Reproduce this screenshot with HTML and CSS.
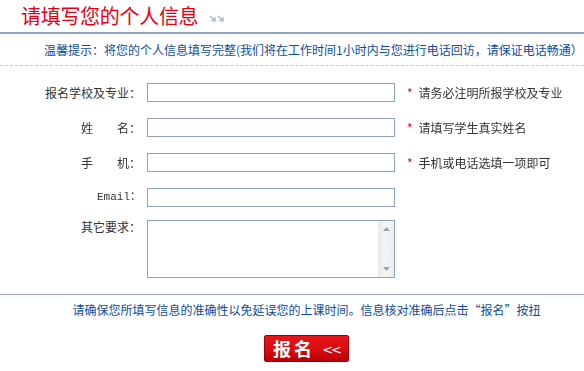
FILE: index.html
```html
<!DOCTYPE html>
<html lang="zh-CN">
<head>
  <meta charset="UTF-8" />
  <title>请填写您的个人信息</title>
  <link rel="stylesheet" href="styles.css">
</head>
<body>
  <div class="page-head">
    <h1>请填写您的个人信息</h1>
    <span class="head-arrows">
      <svg width="16" height="8" viewBox="0 0 16 8"><path d="M1 1l5 5M6 2v4H2M9 1l5 5M14 2v4h-4" stroke="#9fb0c4" stroke-width="1.2" fill="none"/></svg>
    </span>
  </div>

  <div class="tip">温馨提示：将您的个人信息填写完整(我们将在工作时间1小时内与您进行电话回访，请保证电话畅通）</div>

  <form class="signup" onsubmit="event.preventDefault();">
    <label for="school">报名学校及专业：</label>
    <input type="text" id="school" autofocus>
    <span class="note"><i>*</i>请务必注明所报学校及专业</span>

    <label for="name">姓　　名：</label>
    <input type="text" id="name">
    <span class="note"><i>*</i>请填写学生真实姓名</span>

    <label for="mobile">手　　机：</label>
    <input type="text" id="mobile">
    <span class="note"><i>*</i>手机或电话选填一项即可</span>

    <label for="email" class="mono">Email：</label>
    <input type="text" id="email">
    <span class="note"></span>

    <label for="other" class="lift">其它要求：</label>
    <div class="area-box lift">
      <textarea id="other"></textarea>
      <span class="fake-scroll">
        <svg width="7" height="4" viewBox="0 0 7 4"><path d="M0 4L3.5 0 7 4z" fill="#a0a0a0"/></svg>
        <svg width="7" height="4" viewBox="0 0 7 4"><path d="M0 0h7L3.5 4z" fill="#a0a0a0"/></svg>
      </span>
    </div>
    <span class="note"></span>
  </form>

  <div class="foot">
    <p>请确保您所填写信息的准确性以免延误您的上课时间。信息核对准确后点击“报名”按扭</p>
    <button type="button" class="submit-btn">报名 <span class="chev">&lt;&lt;</span></button>
  </div>
</body>
</html>
```

FILE: styles.css
```css
body {
  margin: 0;
  background: #fff;
  color: #333;
  font-family: "Noto Sans CJK SC", "Liberation Sans", sans-serif;
  font-size: 12px;
  text-autospace: no-autospace;
  text-spacing-trim: space-all;
}

.page-head {
  display: flex;
  align-items: center;
  height: 32px;
  padding-left: 21px;
  border-bottom: 2px solid #8fa5bf;
}

.page-head h1 {
  margin: 0;
  font-size: 20px;
  font-weight: normal;
  color: #e60012;
  line-height: 24px;
  letter-spacing: -0.3px;
}

.head-arrows {
  margin-left: 11px;
  margin-top: 6px;
  display: flex;
}

.tip {
  height: 31px;
  line-height: 31px;
  padding-left: 44px;
  color: #0d4c98;
  border-bottom: 1px dashed #c8c8c8;
  white-space: nowrap;
  overflow: hidden;
}

.signup {
  display: grid;
  grid-template-columns: 141px 248px 1fr;
  grid-template-rows: 19px 19px 19px 19px 58px;
  column-gap: 6px;
  row-gap: 16px;
  padding: 17px 0 13px;
  align-items: start;
}

.signup label {
  text-align: right;
  height: 19px;
  line-height: 19px;
  color: #333;
  white-space: pre;
}

.signup label.mono {
  font-family: "Liberation Mono", "Noto Sans CJK SC", monospace;
  font-size: 11px;
}

.signup .lift {
  margin-top: -3px;
}

.signup label.lift {
  line-height: 14px;
}

.signup input[type="text"] {
  box-sizing: border-box;
  width: 248px;
  height: 19px;
  border: 1px solid #8ca4bf;
  padding: 0 2px;
  margin: 0;
  font-size: 12px;
  outline: none;
}

.area-box {
  position: relative;
  width: 248px;
  height: 58px;
}

.area-box textarea {
  display: block;
  box-sizing: border-box;
  width: 248px;
  height: 58px;
  border: 1px solid #8ca4bf;
  margin: 0;
  padding: 2px 18px 2px 2px;
  resize: none;
  font-size: 12px;
  outline: none;
}

.fake-scroll {
  position: absolute;
  top: 1px;
  right: 1px;
  bottom: 1px;
  width: 16px;
  display: flex;
  flex-direction: column;
  justify-content: space-between;
  align-items: center;
  padding: 6px 0;
  box-sizing: border-box;
  background: linear-gradient(to right, #e9e9e9, #f6f6f6 50%, #ececec);
}

.note {
  padding-left: 6px;
  line-height: 19px;
  color: #333;
}

.note i {
  font-style: normal;
  color: #e60012;
  margin-right: 6px;
}

.foot {
  border-top: 1px solid #8fa5bf;
  text-align: center;
  padding-left: 29px;
}

.foot p {
  margin: 0;
  height: 30px;
  line-height: 30px;
  color: #0d4c98;
  white-space: nowrap;
}

.submit-btn {
  margin-top: 10px;
  width: 85px;
  height: 27px;
  padding: 0;
  border: 1px solid #9e0000;
  border-radius: 2px;
  background: linear-gradient(#e8161b, #d80c10 55%, #b80004);
  color: #fff;
  font-family: "Noto Sans CJK SC", sans-serif;
  font-size: 18px;
  font-weight: bold;
  letter-spacing: 3px;
  line-height: 25px;
  cursor: pointer;
}

.submit-btn .chev {
  font-family: "DejaVu Sans", sans-serif;
  font-size: 13px;
  font-weight: normal;
  letter-spacing: -2px;
  vertical-align: 2px;
}
```
